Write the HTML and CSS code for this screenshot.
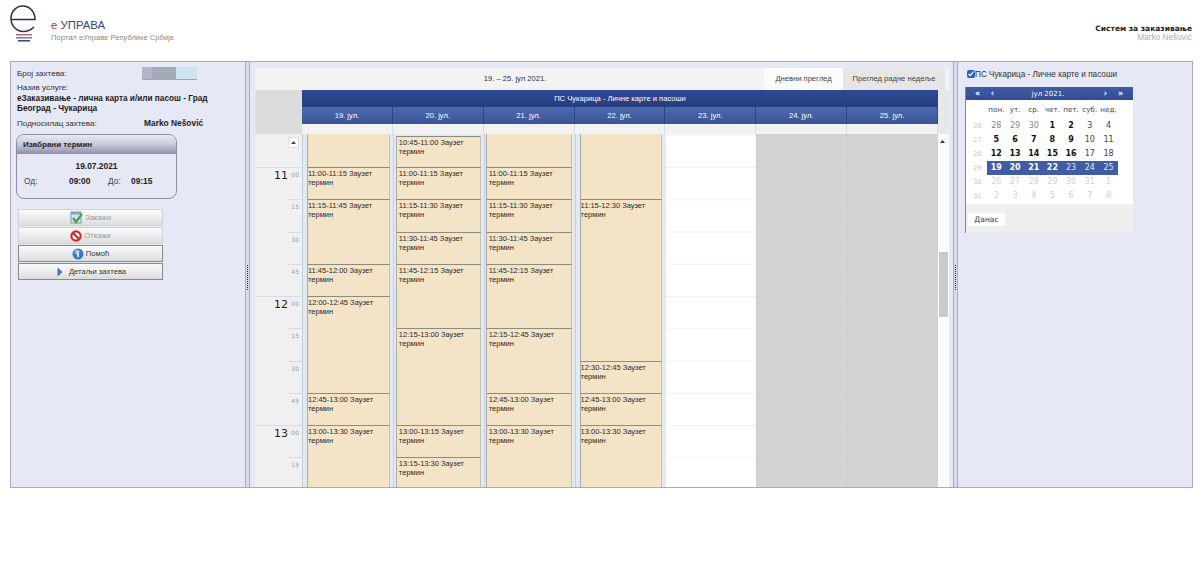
FILE: index.html
```html
<!DOCTYPE html>
<html lang="en">
<head>
    <meta charset="UTF-8">
    <title>eЗаказивање</title>
    <link rel="stylesheet" href="styles.css">
</head>
<body>

    <!-- Header -->
    <div class="top">
        <div class="brand">
            <svg class="logo" width="30" height="42" viewBox="0 0 30 42">
                <path d="M3.5 17.5 H27 C27 9.5 21.5 4 15 4 C8 4 3 9.5 3 16.5 C3 24 8.5 29.5 15.5 29.5 C19.5 29.5 23 28 26 25" fill="none" stroke="#26314f" stroke-width="1.5"/>
                <rect x="8" y="32" width="16" height="1.5" fill="#b56a78"/>
                <rect x="8" y="35" width="16" height="1.5" fill="#6d7da8"/>
                <rect x="10" y="38" width="12" height="1.5" fill="#39456e"/>
            </svg>
            <div class="brand-text">
                <div class="brand-name"><span class="brand-e">е</span> УПРАВА</div>
                <div class="brand-sub">Портал еУправе Републике Србије</div>
            </div>
        </div>
        <div class="system">
            <strong>Систем за заказивање</strong>
            <span>Marko Nešović</span>
        </div>
    </div>

    <div class="shell">
        <!-- Left pane -->
        <div class="left-pane">
            <div class="info-row"><span class="info-label">Број захтева:</span><span class="blurred"></span></div>
            <div class="service-label">Назив услуге:</div>
            <div class="service-name">еЗаказивање - лична карта и/или пасош - Град Београд - Чукарица</div>
            <div class="info-row applicant"><span class="info-label">Подносилац захтева:</span><strong>Marko Nešović</strong></div>

            <div class="term-box">
                <div class="term-head">Изабрани термин</div>
                <div class="term-date">19.07.2021</div>
                <div class="term-times">
                    <span class="term-from">Од:</span><strong class="term-start">09:00</strong>
                    <span class="term-to">До:</span><strong>09:15</strong>
                </div>
            </div>

            <div class="actions">
                <div class="btn btn-off">
                    <svg width="13" height="13" viewBox="0 0 13 13"><rect x="1" y="1" width="10" height="11" fill="#d8e4f2" stroke="#7f97b8"/><rect x="1" y="1" width="10" height="2.5" fill="#7fa3cf"/><path d="M3 7 L6 11 L12 3" fill="none" stroke="#4aa03a" stroke-width="2.2"/></svg>
                    Закажи
                </div>
                <div class="btn btn-off">
                    <svg width="12" height="12" viewBox="0 0 12 12"><circle cx="6" cy="6" r="4.6" fill="#fff" stroke="#cf2a2a" stroke-width="2.2"/><path d="M2.8 2.8 L9.2 9.2" stroke="#cf2a2a" stroke-width="2.2"/></svg>
                    Откажи
                </div>
                <div class="btn">
                    <svg width="12" height="12" viewBox="0 0 12 12"><circle cx="6" cy="6" r="5.5" fill="#3a78c8"/><circle cx="5" cy="4" r="2.5" fill="#8ab8ea"/><rect x="5.2" y="5" width="1.6" height="4" fill="#fff"/><rect x="5.2" y="2.8" width="1.6" height="1.4" fill="#fff"/></svg>
                    Помоћ
                </div>
                <div class="btn btn-wide">
                    <svg width="6" height="10" viewBox="0 0 6 10"><path d="M0.5 0.5 L5.5 5 L0.5 9.5 Z" fill="#3f74b8"/></svg>
                    Детаљи захтева
                </div>
            </div>
        </div>

        <div class="splitter"><i class="grip"></i></div>

        <!-- Center pane -->
        <div class="center-pane">
            <div class="toolbar">
                <div class="range">19. – 25. јул 2021.</div>
                <div class="tab tab-on">Дневни преглед</div>
                <div class="tab">Преглед радне недеље</div>
            </div>

            <div class="cal-head">
                <div class="head-corner"></div>
                <div class="head-main">
                    <div class="resource">ПС Чукарица - Личне карте и пасоши</div>
                    <div class="head-days">
                        <div class="head-day">19. јул.</div>
                        <div class="head-day">20. јул.</div>
                        <div class="head-day">21. јул.</div>
                        <div class="head-day">22. јул.</div>
                        <div class="head-day">23. јул.</div>
                        <div class="head-day">24. јул.</div>
                        <div class="head-day">25. јул.</div>
                    </div>
                    <div class="allday">
                        <i></i><i></i><i></i><i></i><i></i><i></i><i></i>
                    </div>
                </div>
                <div class="head-end"></div>
            </div>

            <div class="cal-body">
                <div class="times">
                    <div class="time-first"><span class="up-btn"><svg width="5" height="3" viewBox="0 0 5 3"><path d="M0 3 L2.5 0 L5 3 Z" fill="#444"/></svg></span></div>
                    <div class="time-row hour"><b>11</b><span>00</span></div>
                    <div class="time-row"><span>15</span></div>
                    <div class="time-row"><span>30</span></div>
                    <div class="time-row"><span>45</span></div>
                    <div class="time-row hour"><b>12</b><span>00</span></div>
                    <div class="time-row"><span>15</span></div>
                    <div class="time-row"><span>30</span></div>
                    <div class="time-row"><span>45</span></div>
                    <div class="time-row hour"><b>13</b><span>00</span></div>
                    <div class="time-row"><span>15</span></div>
                </div>

                <div class="day">
                    <div class="ev first"></div>
                    <div class="ev q1">11:00-11:15 Заузет термин</div>
                    <div class="ev q2">11:15-11:45 Заузет термин</div>
                    <div class="ev q1">11:45-12:00 Заузет термин</div>
                    <div class="ev q3">12:00-12:45 Заузет термин</div>
                    <div class="ev q1">12:45-13:00 Заузет термин</div>
                    <div class="ev q2">13:00-13:30 Заузет термин</div>
                </div>
                <div class="day day-b">
                    <div class="ev first offset">10:45-11:00 Заузет термин</div>
                    <div class="ev q1">11:00-11:15 Заузет термин</div>
                    <div class="ev q1">11:15-11:30 Заузет термин</div>
                    <div class="ev q1">11:30-11:45 Заузет термин</div>
                    <div class="ev q2">11:45-12:15 Заузет термин</div>
                    <div class="ev q3">12:15-13:00 Заузет термин</div>
                    <div class="ev q1">13:00-13:15 Заузет термин</div>
                    <div class="ev q1">13:15-13:30 Заузет термин</div>
                </div>
                <div class="day day-c">
                    <div class="ev first"></div>
                    <div class="ev q1">11:00-11:15 Заузет термин</div>
                    <div class="ev q1">11:15-11:30 Заузет термин</div>
                    <div class="ev q1">11:30-11:45 Заузет термин</div>
                    <div class="ev q2">11:45-12:15 Заузет термин</div>
                    <div class="ev q2">12:15-12:45 Заузет термин</div>
                    <div class="ev q1">12:45-13:00 Заузет термин</div>
                    <div class="ev q2">13:00-13:30 Заузет термин</div>
                </div>
                <div class="day">
                    <div class="ev first-long"></div>
                    <div class="ev q5">11:15-12:30 Заузет термин</div>
                    <div class="ev q1">12:30-12:45 Заузет термин</div>
                    <div class="ev q1">12:45-13:00 Заузет термин</div>
                    <div class="ev q2">13:00-13:30 Заузет термин</div>
                </div>
                <div class="day day-free"></div>
                <div class="day day-closed"></div>
                <div class="day day-closed"></div>

                <div class="scrollbar">
                    <svg class="scroll-up" width="5" height="3" viewBox="0 0 5 3"><path d="M0 3 L2.5 0 L5 3 Z" fill="#333"/></svg>
                    <div class="thumb"></div>
                </div>
            </div>
        </div>

        <div class="splitter"><i class="grip"></i></div>

        <!-- Right pane -->
        <div class="right-pane">
            <label class="resource-check"><input type="checkbox" checked>ПС Чукарица - Личне карте и пасоши</label>
            <div class="mini-cal">
                <div class="mini-head">
                    <span class="nav">«</span><span class="nav">‹</span>
                    <span class="mini-title">јул 2021.</span>
                    <span class="nav">›</span><span class="nav">»</span>
                </div>
                <div class="mini-body">
                    <div class="mini-row names"><i></i><span>пон.</span><span>ут.</span><span>ср.</span><span>чет.</span><span>пет.</span><span>суб.</span><span>нед.</span></div>
                    <div class="mini-row"><i>26</i><span class="muted">28</span><span class="muted">29</span><span class="muted">30</span><b>1</b><b>2</b><span>3</span><span>4</span></div>
                    <div class="mini-row"><i>27</i><b>5</b><b>6</b><b>7</b><b>8</b><b>9</b><span>10</span><span>11</span></div>
                    <div class="mini-row"><i>28</i><b>12</b><b>13</b><b>14</b><b>15</b><b>16</b><span>17</span><span>18</span></div>
                    <div class="mini-row week-on"><i>29</i><b>19</b><b>20</b><b>21</b><b>22</b><span>23</span><span>24</span><span>25</span></div>
                    <div class="mini-row faint"><i>30</i><span>26</span><span>27</span><span>28</span><span>29</span><span>30</span><span>31</span><span>1</span></div>
                    <div class="mini-row faint"><i>31</i><span>2</span><span>3</span><span>4</span><span>5</span><span>6</span><span>7</span><span>8</span></div>
                </div>
                <div class="mini-foot"><span class="today">Данас</span></div>
            </div>
        </div>
    </div>

</body>
</html>
```

FILE: styles.css
```css
body {
    margin: 0;
    background-color: white;
    font-family: "Liberation Sans", Arial, sans-serif;
    font-size: 8.4px;
    color: #222;
    overflow: hidden;
}

/* header */
.top {
    height: 61px;
    display: flex;
    justify-content: space-between;
    box-sizing: border-box;
    padding: 0 8px 0 8px;
}

.brand {
    display: flex;
    padding-top: 2px;
}

.brand-text {
    margin: 16px 0 0 13px;
}

.brand-name {
    font-size: 11.4px;
    color: #39456e;
    line-height: 14px;
}

.brand-e {
    color: #b5323a;
}

.brand-sub {
    font-size: 7.6px;
    color: #8a8a8a;
    margin-top: 1px;
}

.system {
    padding-top: 24px;
    text-align: right;
    line-height: 9px;
}

.system strong {
    display: block;
    font-family: "DejaVu Sans", sans-serif;
    font-size: 7.5px;
}

.system span {
    color: #b0b0b0;
    font-size: 8.3px;
}

/* main frame */
.shell {
    margin-left: 10px;
    width: 1183px;
    height: 427px;
    box-sizing: border-box;
    border: 1px solid #a9a9bd;
    display: flex;
    background-color: #e6e8f6;
    overflow: hidden;
}

.splitter {
    width: 5px;
    flex: none;
    background-color: #d9dbee;
    border-left: 1px solid #a9a9c6;
    border-right: 1px solid #a9a9c6;
    box-sizing: border-box;
    display: flex;
    align-items: center;
    justify-content: center;
}

.grip {
    display: block;
    height: 25px;
    margin-top: 6px;
    border-left: 1px dotted #222;
}

/* left pane */
.left-pane {
    width: 234px;
    flex: none;
    box-sizing: border-box;
    padding: 4px 5px 0 6px;
}

.info-row {
    display: flex;
    align-items: center;
    height: 14px;
}

.info-label {
    width: 125px;
    color: #333;
    font-size: 8.1px;
}

.blurred {
    width: 55px;
    height: 12px;
    background: linear-gradient(90deg, #b0b6c8 0 10px, #a3aab8 10px 34px, #cfe2f0 34px);
    border-bottom: 1px solid #8fa6d0;
}

.service-label {
    margin-top: 3px;
    line-height: 10px;
    color: #333;
    font-size: 8.1px;
}

.service-name {
    font-weight: bold;
    font-size: 8.25px;
    line-height: 9.5px;
    margin-top: 1px;
    width: 195px;
    color: #1c1c1c;
}

.applicant {
    margin-top: 3px;
}

.applicant strong {
    margin-left: 2px;
}

.term-box {
    width: 161px;
    height: 65px;
    margin: 4px 0 0 -1px;
    box-sizing: border-box;
    border: 1px solid #8e8ea8;
    border-radius: 8px;
    overflow: hidden;
}

.term-head {
    height: 19px;
    line-height: 19px;
    padding-left: 6px;
    font-weight: bold;
    font-size: 8px;
    background: linear-gradient(#e9e9f2, #c9c9db 50%, #8d8dab);
}

.term-date {
    text-align: center;
    font-weight: bold;
    margin-top: 6px;
    line-height: 12px;
}

.term-times {
    display: flex;
    margin-top: 3px;
    padding-left: 7px;
    line-height: 12px;
}

.term-from {
    width: 45px;
    color: #444;
}

.term-start {
    width: 39px;
}

.term-to {
    width: 23px;
    color: #444;
}

.actions {
    margin: 10px 0 0 1px;
    width: 145px;
}

.btn {
    height: 17px;
    margin-bottom: 1px;
    box-sizing: border-box;
    border: 1px solid #8a8a8a;
    background: linear-gradient(#fafafa, #eaeaea 60%, #dcdcdc);
    display: flex;
    align-items: center;
    justify-content: center;
    gap: 2px;
    color: #333;
    font-size: 7.6px;
}

.btn-off {
    border-color: #d4d4d8;
    color: #999;
}

.btn-wide {
    gap: 6px;
    padding-left: 2px;
}

/* center pane */
.center-pane {
    width: 703px;
    flex: none;
    box-sizing: border-box;
    padding: 6px 4px 0 5px;
    display: flex;
    flex-direction: column;
}

.toolbar {
    height: 22px;
    display: flex;
    background-color: #f3f3f3;
    padding-right: 4px;
    flex: none;
    font-size: 7.6px;
}

.range {
    flex: 1;
    text-align: center;
    line-height: 22px;
    padding-left: 11px;
    color: #333;
}

.tab {
    width: 102px;
    text-align: center;
    line-height: 22px;
    background-color: #e6e6e6;
    color: #444;
}

.tab-on {
    width: 79px;
    background-color: #fbfbfb;
}

.cal-head {
    display: flex;
    height: 44px;
    flex: none;
}

.head-corner {
    width: 47px;
    background-color: #dcdcdc;
}

.head-main {
    width: 636px;
}

.head-end {
    flex: 1;
    background-color: #e8e8e8;
}

.resource {
    height: 17px;
    line-height: 17px;
    text-align: center;
    color: white;
    font-size: 7.6px;
    background: linear-gradient(#2f4a94, #263c7e);
}

.head-days {
    display: grid;
    grid-template-columns: repeat(7, 1fr);
    height: 17px;
    background: linear-gradient(#4c6cb0, #3a5296);
}

.head-day {
    text-align: center;
    line-height: 17px;
    color: white;
    font-size: 7.6px;
    border-right: 1px solid #2d4384;
}

.allday {
    display: grid;
    grid-template-columns: repeat(7, 1fr);
    height: 10px;
    background-color: #f2f2f2;
}

.allday i {
    border-right: 1px solid #d5dce6;
}

.cal-body {
    display: flex;
    flex: 1;
    min-height: 0;
    overflow: hidden;
    font-size: 7.5px;
}

.times {
    width: 47px;
    flex: none;
    background-color: #f0f0f3;
    font-family: "DejaVu Sans", sans-serif;
}

.time-first {
    height: 33px;
    box-sizing: border-box;
    padding: 3px 0 0 33px;
}

.up-btn {
    width: 11px;
    height: 11px;
    display: flex;
    align-items: center;
    justify-content: center;
    background-color: white;
    border: 1px solid #ddd;
    box-sizing: border-box;
}

.time-row {
    height: 32.25px;
    box-sizing: border-box;
    position: relative;
    display: flex;
    justify-content: flex-end;
    padding: 4px 3px 0 0;
    color: #999;
    font-size: 6px;
    background: linear-gradient(#dcdcdc, #dcdcdc) no-repeat right top / 14px 1px;
}

.time-row.hour {
    background: linear-gradient(#dcdcdc, #dcdcdc) no-repeat left top / 100% 1px;
}

.time-row b {
    position: absolute;
    left: 19px;
    top: 2px;
    font-size: 11px;
    font-weight: normal;
    color: #222;
}

.day {
    width: 90.86px;
    flex: none;
    box-sizing: border-box;
    padding: 0 3px 0 5px;
    background: linear-gradient(90deg, #c3d0de 0 1px, #e3e9f0 1px);
}

.day-b {
    padding: 0 3px 0 3px;
}

.day-c {
    padding: 0 3px 0 2px;
}

.ev {
    box-sizing: border-box;
    background-color: #f3e3c7;
    border-left: 1px solid #a9a9a5;
    border-right: 1px solid #c4c0b4;
    border-top: 1px solid #8d8a80;
    padding: 1px 0 0 0;
    line-height: 9px;
    color: #2a2a2a;
    overflow: hidden;
}

.day-b .ev,
.day-c .ev {
    padding-left: 2px;
}

.first {
    height: 33px;
    border-top: none;
}

.first-long {
    height: 65.25px;
    border-top: none;
}

.offset {
    margin-top: 2px;
    height: 31px;
    border-top: 1px solid #8d8a80;
}

.q1 { height: 32.25px; }
.q2 { height: 64.5px; }
.q3 { height: 96.75px; }
.q5 { height: 161.25px; }

.day-free {
    padding: 0;
    background: linear-gradient(#fff 31.25px, #f1f1f1 31.25px) 0 1.75px / 100% 32.25px;
    border-left: 1px solid #e4e9ef;
}

.day-closed {
    padding: 0;
    background: linear-gradient(#d3d3d3 31.25px, #ccd1d3 31.25px) 0 1.75px / 100% 32.25px;
    border-left: 1px solid #c6d0da;
}

/* fake scrollbar of the day grid */
.scrollbar {
    flex: 1;
    background-color: #fbfbfb;
    position: relative;
}

.scroll-up {
    position: absolute;
    left: 2px;
    top: 6px;
}

.thumb {
    position: absolute;
    left: 1px;
    right: 1px;
    top: 118px;
    height: 65px;
    background-color: #c9c9c9;
}

/* right pane */
.right-pane {
    flex: 1;
    box-sizing: border-box;
    padding: 6px 0 0 7px;
}

.resource-check {
    display: flex;
    align-items: center;
    height: 12px;
    padding-left: 2px;
    color: #333;
    font-size: 8.2px;
}

.resource-check input {
    margin: 0;
    width: 8px;
    height: 8px;
    accent-color: #2a5fc4;
}

.mini-cal {
    width: 168px;
    margin-top: 7px;
    font-family: "DejaVu Sans", sans-serif;
    font-size: 8px;
    border-left: 1px solid #888;
    box-sizing: border-box;
}

.mini-head {
    height: 13px;
    display: flex;
    align-items: center;
    background: linear-gradient(#3f5ca4, #314c92);
    color: white;
    padding: 0 5px 0 4px;
    line-height: 12px;
}

.nav {
    width: 15px;
    font-weight: bold;
    text-align: center;
}

.mini-title {
    flex: 1;
    text-align: center;
    font-size: 7px;
    padding-right: 2px;
}

.mini-body {
    height: 104px;
    background-color: white;
    box-sizing: border-box;
    padding: 3px 0 0 2px;
}

.mini-row {
    display: grid;
    grid-template-columns: 19px repeat(7, 18.7px);
    height: 14px;
    line-height: 14px;
    text-align: center;
    color: #444;
}

.mini-row i {
    font-style: normal;
    color: #c4c4c4;
    font-size: 6.5px;
}

.mini-row b {
    color: #111;
}

.mini-row .muted {
    color: #888;
}

.names {
    font-size: 7.2px;
    margin-bottom: 2px;
}

.week-on {
    background: linear-gradient(#3f5ca4, #3f5ca4) no-repeat 19px 0 / 131px 14px;
    color: #dfe6f5;
}

.week-on b {
    color: white;
}

.faint span {
    color: #d0d0d0;
}

.mini-foot {
    height: 29px;
    background-color: #efefef;
    padding: 9px 0 0 2px;
    box-sizing: border-box;
}

.today {
    display: block;
    width: 37px;
    height: 13px;
    line-height: 13px;
    text-align: center;
    background-color: white;
    color: #333;
    font-size: 7.6px;
}
```
